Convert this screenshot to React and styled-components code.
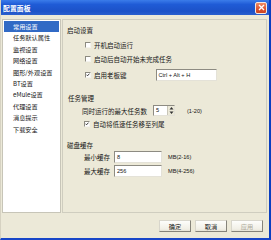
import styled, { createGlobalStyle } from 'styled-components';

const GlobalStyle = createGlobalStyle`
  html, body {
    margin: 0;
    padding: 0;
    background: #ece9d8;
  }
  * {
    box-sizing: border-box;
  }
`;

const navItems = [
  '常用设置',
  '任务默认属性',
  '监视设置',
  '网络设置',
  '图形/外观设置',
  'BT设置',
  'eMule设置',
  '代理设置',
  '消息提示',
  '下载安全',
];

function CheckBox({ checked }) {
  return (
    <Box>
      {checked && (
        <svg width="6" height="6" viewBox="0 0 6 6">
          <path d="M0.8 2.6 L2.3 4.2 L5.2 1" stroke="#1a1a1a" strokeWidth="1.3" fill="none" />
        </svg>
      )}
    </Box>
  );
}

function App() {
  return (
    <Window>
      <GlobalStyle />
      <TitleBar>
        <Title>配置面板</Title>
        <CloseButton>
          <svg width="7" height="7" viewBox="0 0 7 7">
            <path d="M1 1 L6 6 M6 1 L1 6" stroke="#fff" strokeWidth="1.4" />
          </svg>
        </CloseButton>
      </TitleBar>

      <Content>
        <NavList>
          {navItems.map((item, i) => (
            <NavItem key={item} $active={i === 0}>
              {item}
            </NavItem>
          ))}
        </NavList>

        <Panel>
          <Heading $mt={6}>启动设置</Heading>
          <Row $mt={7} $h={8} $indent={18}>
            <CheckBox />
            <Label>开机启动运行</Label>
          </Row>
          <Row $mt={6} $h={8} $indent={18}>
            <CheckBox />
            <Label>启动后自动开始未完成任务</Label>
          </Row>
          <Row $mt={6} $h={12} $indent={18}>
            <CheckBox checked />
            <Label>启用老板键</Label>
            <TextInput $w={61} $ml={29}>Ctrl + Alt + H</TextInput>
          </Row>

          <Heading $mt={13} $indent={1}>任务管理</Heading>
          <Row $mt={3} $h={11} $indent={15}>
            <Label $plain>同时运行的最大任务数</Label>
            <Spin>
              <SpinValue>5</SpinValue>
              <SpinArrows>
                <svg width="5" height="9" viewBox="0 0 5 9">
                  <path d="M2.5 1 L4.5 3.5 L0.5 3.5 Z M0.5 5.5 L4.5 5.5 L2.5 8 Z" fill="#333" />
                </svg>
              </SpinArrows>
            </Spin>
            <Hint $ml={12}>(1-20)</Hint>
          </Row>
          <Row $mt={4} $h={8} $indent={17}>
            <CheckBox checked />
            <Label>自动将低速任务移至列尾</Label>
          </Row>

          <Heading $mt={13}>磁盘缓存</Heading>
          <Row $mt={2} $h={12} $indent={17}>
            <Label $plain>最小缓存</Label>
            <TextInput $w={48} $ml={4}>8</TextInput>
            <Hint $ml={6}>MB(2-16)</Hint>
          </Row>
          <Row $mt={2} $h={12} $indent={17}>
            <Label $plain>最大缓存</Label>
            <TextInput $w={48} $ml={4}>256</TextInput>
            <Hint $ml={6}>MB(4-256)</Hint>
          </Row>
        </Panel>
      </Content>

      <Footer>
        <Button>确定</Button>
        <Button>取消</Button>
        <Button $disabled>应用</Button>
      </Footer>
    </Window>
  );
}

const Window = styled.div`
  width: 271px;
  height: 240px;
  display: flex;
  flex-direction: column;
  background: #ece9d8;
  border-right: 2px solid #0a3fc0;
  border-bottom: 2px solid #1846c8;
  border-left: 1px solid #d6d2c2;
  font-family: 'Noto Sans CJK SC', 'Liberation Sans', sans-serif;
  color: #151515;
  overflow: hidden;
`;

const TitleBar = styled.div`
  height: 15px;
  margin-left: -1px;
  flex: none;
  display: flex;
  align-items: center;
  justify-content: space-between;
  padding: 0 2px 0 3px;
  background: linear-gradient(180deg, #3b7cea 0%, #1f5bd6 30%, #1c52c8 75%, #2a5fce 100%);
`;

const Title = styled.span`
  color: #fff;
  font-size: 6.8px;
  font-weight: 700;
  line-height: 8px;
  letter-spacing: 0.1px;
`;

const CloseButton = styled.div`
  width: 12px;
  height: 12px;
  display: flex;
  align-items: center;
  justify-content: center;
  border: 1px solid #f4e8e0;
  border-radius: 2px;
  background: linear-gradient(180deg, #f08c64 0%, #dd5330 60%, #c94422 100%);
`;

const Content = styled.div`
  display: flex;
  gap: 1px;
  padding: 4px 2px 0 1px;
  flex: none;
`;

const NavList = styled.div`
  width: 59px;
  height: 194px;
  flex: none;
  background: #fff;
  border: 1px solid #c7c5b8;
  padding: 1px 1px 0;
`;

const NavItem = styled.div`
  height: 11.4px;
  line-height: 11.4px;
  padding-left: 9px;
  font-size: 6.2px;
  white-space: nowrap;
  background: ${(p) => (p.$active ? '#316ac5' : 'transparent')};
  color: ${(p) => (p.$active ? '#fff' : '#151515')};
`;

const Panel = styled.div`
  flex: 1;
  height: 194px;
  border: 1px solid #cfcdbf;
  padding-left: 4px;
  display: flex;
  flex-direction: column;
`;

const Heading = styled.div`
  margin-top: ${(p) => p.$mt}px;
  margin-left: ${(p) => p.$indent || 0}px;
  height: 8px;
  line-height: 8px;
  font-size: 6.5px;
`;

const Row = styled.div`
  margin-top: ${(p) => p.$mt}px;
  height: ${(p) => p.$h}px;
  padding-left: ${(p) => p.$indent}px;
  display: flex;
  align-items: center;
`;

const Box = styled.span`
  width: 6px;
  height: 6px;
  flex: none;
  display: flex;
  align-items: center;
  justify-content: center;
  background: #fff;
  border-top: 1px solid #8c8a80;
  border-left: 1px solid #8c8a80;
  border-right: 1px solid #f4f3ee;
  border-bottom: 1px solid #f4f3ee;
  margin-right: 3px;
  overflow: visible;
`;

const Label = styled.span`
  font-size: 6.5px;
  line-height: 8px;
  white-space: nowrap;
`;

const TextInput = styled.div`
  width: ${(p) => p.$w}px;
  height: 12px;
  margin-left: ${(p) => p.$ml}px;
  background: #fff;
  border-top: 1px solid #8d8b82;
  border-left: 1px solid #8d8b82;
  border-right: 1px solid #e4e2d8;
  border-bottom: 1px solid #e4e2d8;
  padding-left: 2px;
  font-family: 'Liberation Sans', sans-serif;
  font-size: 5.6px;
  line-height: 10px;
  white-space: nowrap;
`;

const Spin = styled.div`
  width: 22px;
  height: 11px;
  margin-left: 6px;
  display: flex;
  background: #fff;
  border-top: 1px solid #8d8b82;
  border-left: 1px solid #8d8b82;
  border-right: 1px solid #e4e2d8;
  border-bottom: 1px solid #e4e2d8;
`;

const SpinValue = styled.span`
  flex: 1;
  padding-left: 2px;
  font-family: 'Liberation Sans', sans-serif;
  font-size: 5.6px;
  line-height: 9px;
`;

const SpinArrows = styled.span`
  width: 7px;
  display: flex;
  align-items: center;
  justify-content: center;
  background: #ece9d8;
  border-left: 1px solid #c9c6b8;
`;

const Hint = styled.span`
  margin-left: ${(p) => p.$ml}px;
  font-family: 'Liberation Sans', sans-serif;
  font-size: 5.6px;
  line-height: 8px;
  white-space: nowrap;
`;

const Footer = styled.div`
  display: flex;
  justify-content: flex-end;
  gap: 4px;
  padding: 7px 6px 0 0;
`;

const Button = styled.div`
  width: 32px;
  height: 12px;
  display: flex;
  align-items: center;
  justify-content: center;
  font-size: 6.2px;
  background: linear-gradient(180deg, #fdfdfb 0%, #f1efe6 80%, #e6e3d6 100%);
  border-top: 1px solid #d8d6cc;
  border-left: 1px solid #d8d6cc;
  border-right: 1px solid #85837a;
  border-bottom: 1px solid #85837a;
  color: ${(p) => (p.$disabled ? '#aca899' : '#151515')};
`;

export default App;
